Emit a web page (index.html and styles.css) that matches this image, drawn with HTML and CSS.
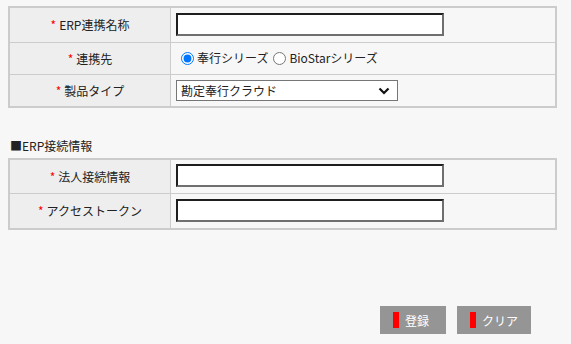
FILE: index.html
```html
<!DOCTYPE html>
<html lang="ja">
<head>
  <meta charset="UTF-8">
  <title>ERP連携設定</title>
  <link rel="stylesheet" href="styles.css">
</head>
<body>

<div class="page">
  <!-- 基本情報 -->
  <table class="form-table">
    <tr>
      <th><span class="req">*</span>ERP連携名称</th>
      <td><input type="text" class="text-input"></td>
    </tr>
    <tr>
      <th><span class="req">*</span>連携先</th>
      <td>
        <div class="radio-group">
          <label><input type="radio" name="dest" checked>奉行シリーズ</label>
          <label><input type="radio" name="dest">BioStarシリーズ</label>
        </div>
      </td>
    </tr>
    <tr class="last">
      <th><span class="req">*</span>製品タイプ</th>
      <td class="select-cell">
        <div class="select-wrap">
          <select class="select-box">
            <option>勘定奉行クラウド</option>
          </select>
          <svg class="chevron" width="12" height="8" viewBox="0 0 12 8">
            <path d="M1.5 1.5 L6 6 L10.5 1.5" fill="none" stroke="#111" stroke-width="2.2"/>
          </svg>
        </div>
      </td>
    </tr>
  </table>

  <!-- ERP接続情報 -->
  <div class="section-title">■ERP接続情報</div>
  <table class="form-table">
    <tr>
      <th><span class="req">*</span>法人接続情報</th>
      <td class="first-input"><input type="text" class="text-input"></td>
    </tr>
    <tr class="last">
      <th><span class="req">*</span>アクセストークン</th>
      <td><input type="text" class="text-input"></td>
    </tr>
  </table>

  <div class="actions">
    <button class="btn btn-save"><span class="bar"></span>登録</button>
    <button class="btn btn-clear"><span class="bar"></span>クリア</button>
  </div>
</div>

</body>
</html>
```

FILE: styles.css
```css
* { margin: 0; padding: 0; box-sizing: border-box; }
body {
  font-family: "Noto Sans CJK JP", "Noto Sans", sans-serif;
  font-size: 12px;
  line-height: 16px;
  color: #222;
  background: #f7f7f7;
}

.page {
  padding: 6px 8px 0 8px;
}

/* Form tables */
.form-table {
  width: 549px;
  border: 2px solid #cccccc;
  border-collapse: separate;
  border-spacing: 0;
}
.form-table th {
  width: 161px;
  background: #eeeeee;
  font-weight: normal;
  text-align: center;
  border-right: 1px solid #cccccc;
  border-bottom: 1px solid #cccccc;
  padding: 0 4px;
  white-space: nowrap;
}
.form-table td {
  border-bottom: 1px solid #cccccc;
  padding: 5px 5px 6px;
  vertical-align: middle;
}
.form-table td.select-cell { padding-bottom: 5px; }
.form-table td.first-input { padding-top: 4px; }
.form-table tr.last th,
.form-table tr.last td { border-bottom: none; }

.req {
  color: #ff0000;
  margin-right: 3px;
}

.text-input {
  display: block;
  width: 268px;
  height: 23px;
  background: #fff;
  border: 2px solid;
  border-color: #1e1e1e #6f6f6f #6f6f6f #1e1e1e;
  outline: none;
}

.radio-group {
  display: flex;
  align-items: center;
  height: 20px;
}
.radio-group label {
  display: flex;
  align-items: center;
}
.radio-group input {
  width: 13px;
  height: 13px;
  margin: 0 3px 0 5px;
  accent-color: #0075ff;
}

.select-wrap {
  position: relative;
  width: 222px;
  height: 21px;
}
.select-box {
  display: block;
  -webkit-appearance: none;
  appearance: none;
  width: 222px;
  height: 21px;
  border: 1px solid #767676;
  background: #fff;
  padding: 0 20px 0 4px;
  font-family: inherit;
  font-size: 12px;
  color: #222;
  border-radius: 0;
}
.chevron {
  position: absolute;
  right: 8px;
  top: 7px;
  pointer-events: none;
}

.section-title {
  margin: 30px 0 4px 2px;
  line-height: 16px;
}

/* Buttons */
.actions {
  display: flex;
  justify-content: flex-end;
  gap: 11px;
  margin-top: 76px;
  padding-right: 32px;
}
.btn {
  display: inline-flex;
  align-items: center;
  height: 28px;
  padding: 0 0 0 13px;
  background: #959595;
  color: #fff;
  border: none;
  font-family: inherit;
  font-size: 12px;
  cursor: pointer;
}
.btn-save { width: 66px; }
.btn-clear { width: 74px; }
.btn .bar {
  display: inline-block;
  width: 6px;
  height: 16px;
  background: #ff0000;
  margin-right: 6px;
}
```
